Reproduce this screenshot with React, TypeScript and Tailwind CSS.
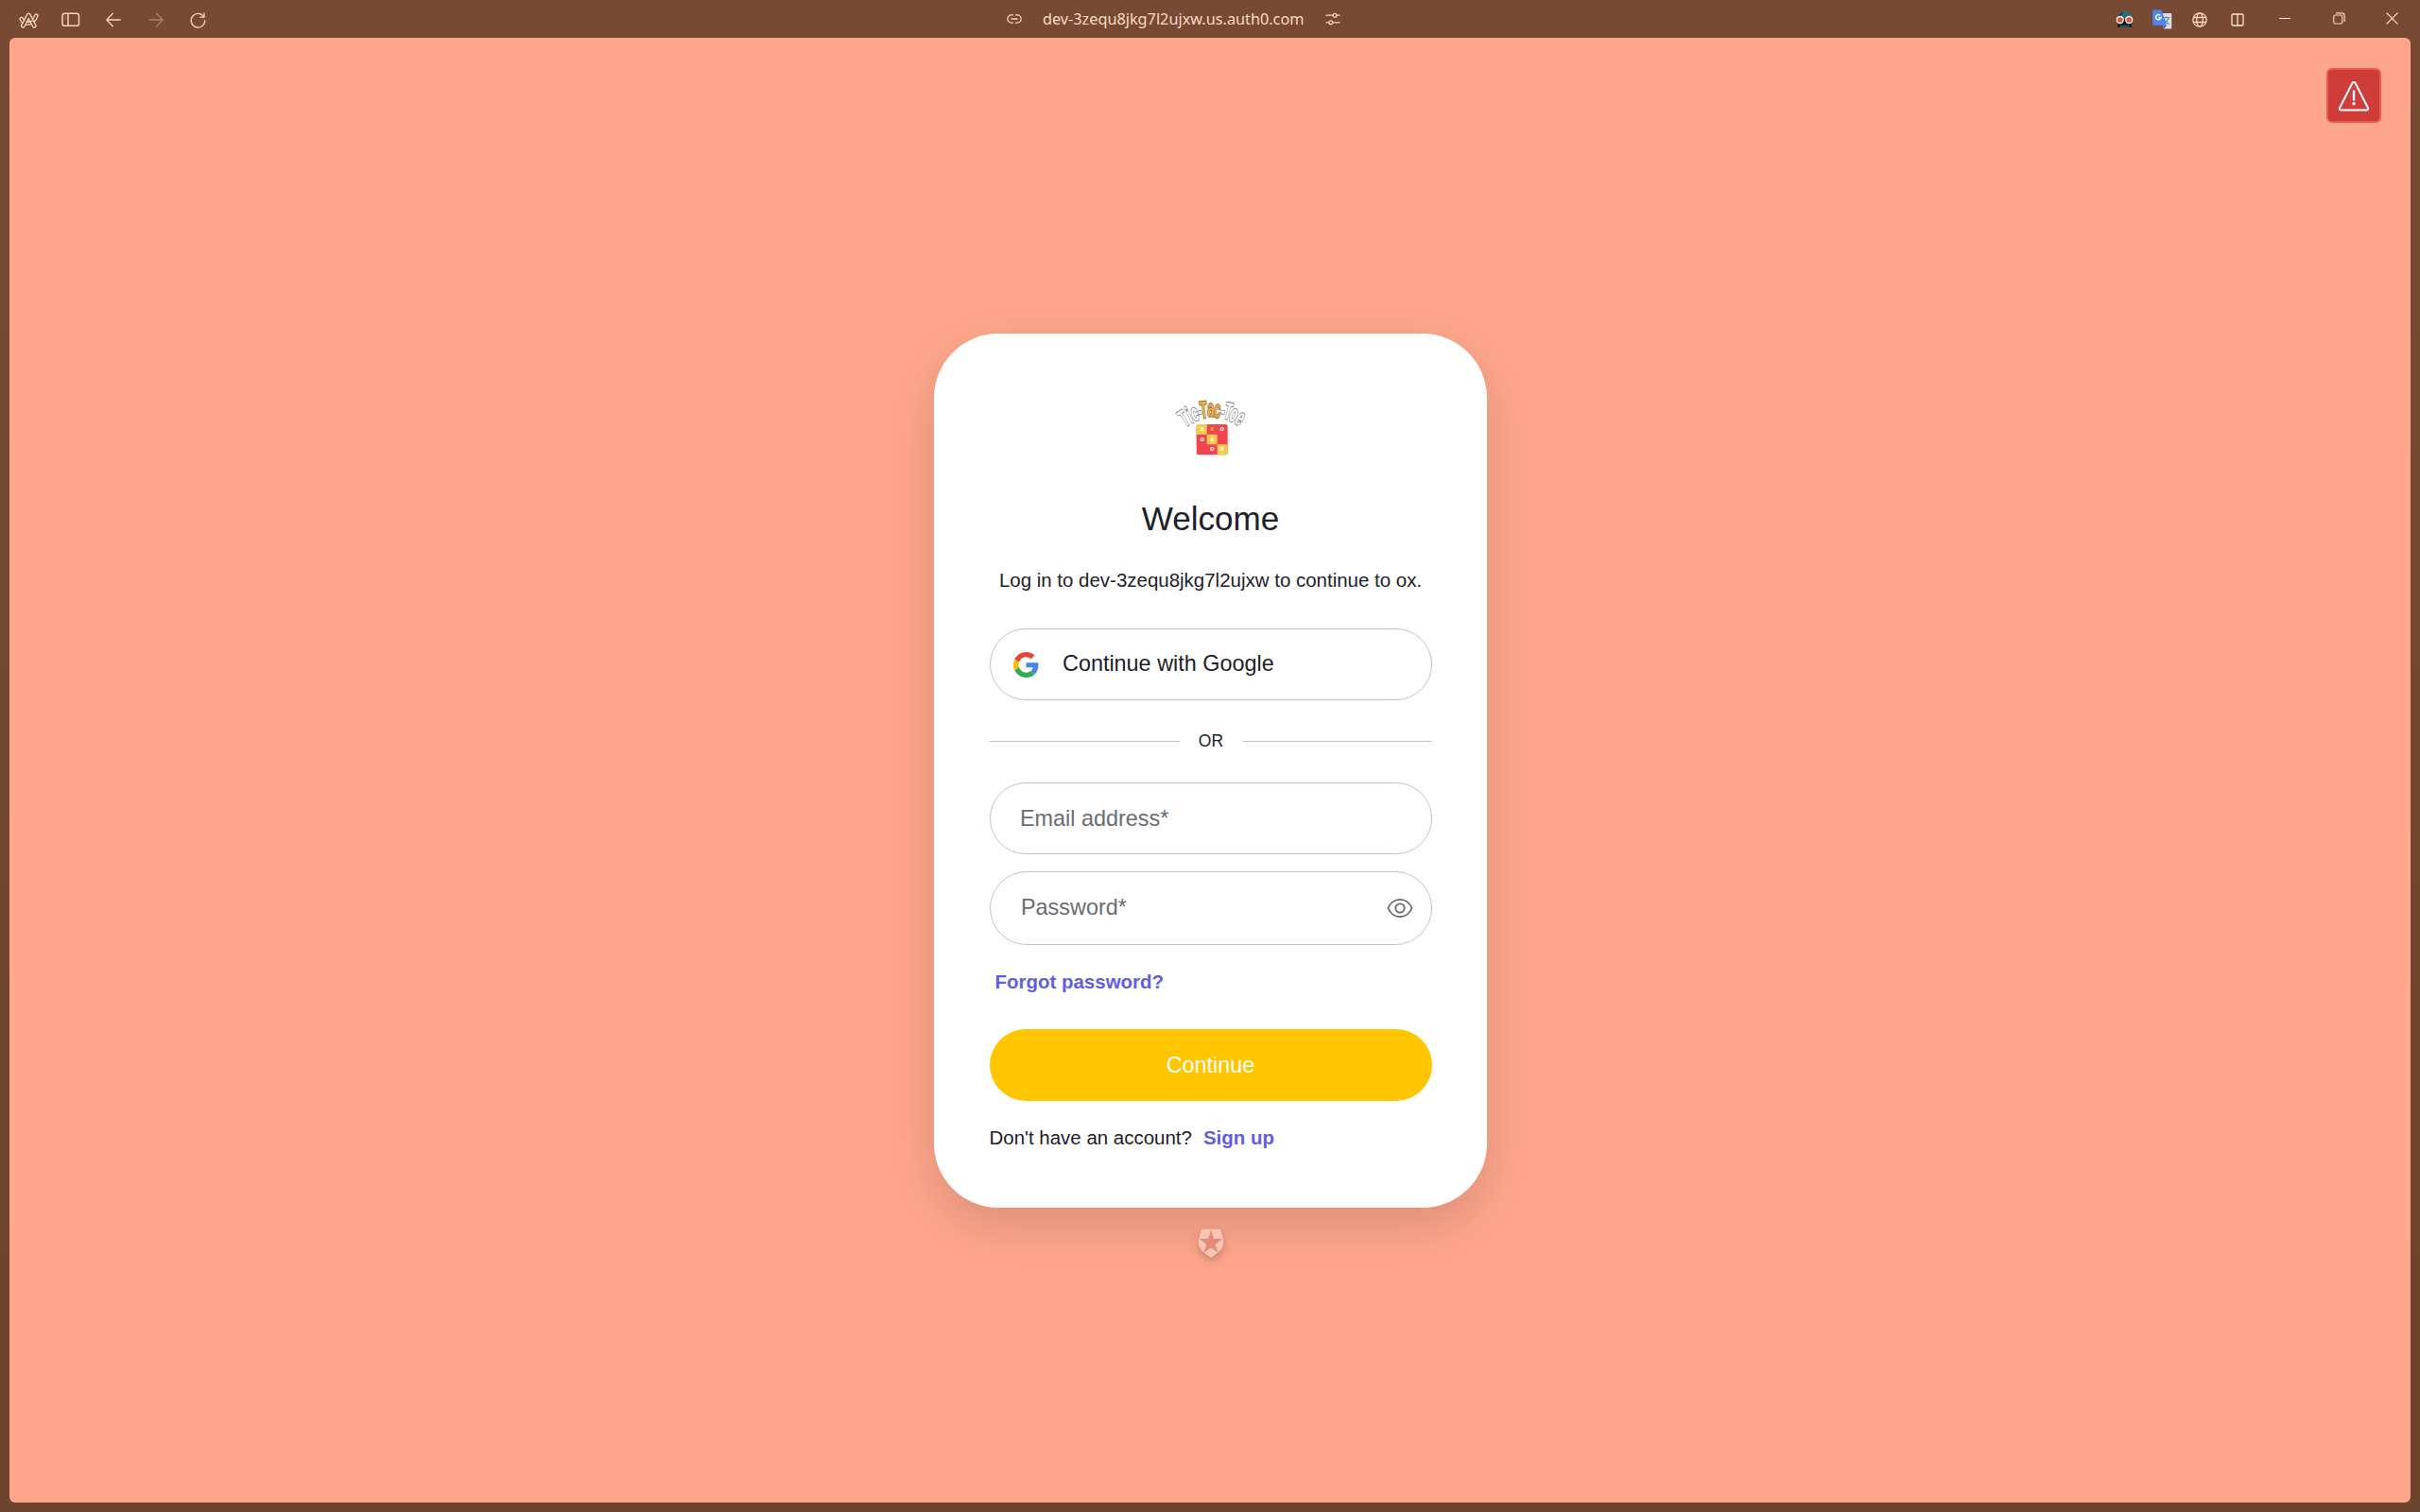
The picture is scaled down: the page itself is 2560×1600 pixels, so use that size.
import React from "react";

const CHROME = "#f6d3bd";

function ArcIcon() {
  const legs = "M4.300 14.900 10.300 3.400 16.300 14.900";
  const ribbon = "M2.700 7.500C5.500 13.800 14.800 14 18.300 4.200";
  return (
    <svg width="21" height="19" viewBox="0 0 21 18" fill="none" strokeLinejoin="round" strokeLinecap="round">
      <path d={ribbon} stroke={CHROME} strokeWidth="4.600" />
      <path d={ribbon} stroke="#774a33" strokeWidth="2" />
      <path d={legs} stroke={CHROME} strokeWidth="4.800" />
      <path d={legs} stroke="#774a33" strokeWidth="2.100" />
      <path d="M8 10.200c2.300 1 4 .7 6-.6" stroke={CHROME} strokeWidth="1.300" />
    </svg>
  );
}

function SidebarIcon() {
  return (
    <svg width="20" height="16" viewBox="0 0 20 16" fill="none" stroke={CHROME} strokeWidth="1.500">
      <rect x="1" y="1.300" width="17.500" height="13" rx="2.600" />
      <path d="M7 1.300v13" />
      <path d="M3.300 4.500h1.600M3.300 6.800h1.600" strokeWidth="0.700" opacity=".6" />
    </svg>
  );
}

function ArrowIcon({ flip = false }: { flip?: boolean }) {
  return (
    <svg width="16" height="16" viewBox="0 0 16 16" fill="none" stroke={CHROME} strokeWidth="1.300" strokeLinecap="round" strokeLinejoin="round" className={flip ? "-scale-x-100 opacity-40" : ""}>
      <path d="M7.300 1.300.8 8l6.500 6.700M.8 8h14.400" />
    </svg>
  );
}

function ReloadIcon() {
  return (
    <svg width="17" height="17" viewBox="0 0 17 17" fill="none" stroke={CHROME} strokeWidth="1.300" strokeLinecap="round" strokeLinejoin="round">
      <path d="M14.800 5A7.300 7.300 0 1 0 15.800 8.800" />
      <path d="M15 1v4.200h-4.200" />
    </svg>
  );
}

function LinkIcon() {
  return (
    <svg width="16" height="10" viewBox="0 0 16 10" fill="none" stroke={CHROME} strokeWidth="1.300" strokeLinecap="round">
      <path d="M6.500.9H4.900a4.100 4.100 0 0 0 0 8.200h1.600M9.500.9h1.600a4.100 4.100 0 0 1 0 8.200H9.500M5 5h6" />
    </svg>
  );
}

function SlidersIcon() {
  return (
    <svg width="16" height="14" viewBox="0 0 16 14" fill="none" stroke={CHROME} strokeWidth="1.300" strokeLinecap="round">
      <path d="M1 3.200h6.800M12.200 3.200H15M1 10.800h2.600M8 10.800h7" />
      <circle cx="10" cy="3.200" r="1.900" />
      <circle cx="5.800" cy="10.800" r="1.900" />
    </svg>
  );
}

function GogglesIcon() {
  return (
    <svg width="19" height="19" viewBox="0 0 19 19">
      <path d="M2.500 8.500h14l.5 9.500H2.200Z" fill="#15191d" />
      <path d="M1.500 9c0-5 3.500-8.500 8-8.500S17.500 4 17.500 9Z" fill="#2f6a78" />
      <path d="M2.500 6.500c1.500-2 3-4 6-4.800L5 6.500Z" fill="#1b3640" />
      <path d="M4.500 15.600h10V18h-10Z" fill="#1d5367" />
      <circle cx="4.700" cy="10" r="3.500" fill="#c95f45" stroke="#fff2e8" strokeWidth="1.300" />
      <circle cx="14.200" cy="10" r="3.500" fill="#c95f45" stroke="#fff2e8" strokeWidth="1.300" />
    </svg>
  );
}

function TranslateIcon() {
  return (
    <svg width="21" height="21" viewBox="0 0 21 21">
      <path d="M8 4h11.200c.6 0 1 .4 1 1v14.500c0 .6-.4 1-1 1H12Z" fill="#dcdfe3" />
      <path d="M11 8.800h7.500M14.500 7.500v1.300M17 9c-.6 3-2.500 5-4.500 6.200M12.500 10.500c1 2 3 4 5 5" stroke="#607d8b" strokeWidth="1.100" fill="none" />
      <path d="M11.200 16.800h4L12 20.500Z" fill="#2f5fc4" />
      <path d="M1.200.5h8.300l5.700 16.300h-14c-.6 0-1-.4-1-1V1.500c0-.6.4-1 1-1Z" fill="#4d86ee" />
      <path d="M8.300 6.300A2.700 2.700 0 1 0 9 8.500H6.300" stroke="#fff" strokeWidth="1.500" fill="none" />
    </svg>
  );
}

function GlobeIcon() {
  return (
    <svg width="16" height="16" viewBox="0 0 16 16" fill="none" stroke={CHROME} strokeWidth="1.300">
      <circle cx="8" cy="8" r="7.200" />
      <ellipse cx="8" cy="8" rx="3.300" ry="7.200" />
      <path d="M1.500 5.500h13M1.500 10.500h13" />
    </svg>
  );
}

function SplitIcon() {
  return (
    <svg width="14" height="14" viewBox="0 0 14 14" fill="none" stroke="#ffe6d6" strokeWidth="1.300">
      <rect x="1" y="1" width="12" height="12" rx="1.300" />
      <path d="M7 1v12" />
    </svg>
  );
}

function RestoreIcon() {
  return (
    <svg width="13" height="13" viewBox="0 0 13 13" fill="none" stroke={CHROME} strokeWidth="1.200">
      <rect x=".8" y="3" width="9" height="9" rx="1.400" />
      <path d="M3 .9h6.300c1.600 0 2.800 1.200 2.800 2.800V10" />
    </svg>
  );
}

function CloseIcon() {
  return (
    <svg width="13" height="13" viewBox="0 0 13 13" fill="none" stroke="#ffe6d6" strokeWidth="1.200">
      <path d="m.6.6 11.800 11.800M12.400.6.6 12.400" />
    </svg>
  );
}

function Slot({ w, children }: { w: string; children?: React.ReactNode }) {
  return <div className={`flex h-full shrink-0 items-center justify-center ${w}`}>{children}</div>;
}

function TitleBar() {
  return (
    <header className="grid h-10 shrink-0 grid-cols-[1058px_1fr_354px]">
      <div className="flex items-center pt-0.5 pl-[7px]">
        <Slot w="w-[46px]"><ArcIcon /></Slot>
        <Slot w="w-[44px]"><SidebarIcon /></Slot>
        <Slot w="w-[45px]"><ArrowIcon /></Slot>
        <Slot w="w-[45px]"><ArrowIcon flip /></Slot>
        <Slot w="w-[45px]"><ReloadIcon /></Slot>
      </div>
      <div className="flex items-center pl-[7px]">
        <LinkIcon />
        <span className="ml-[22px] w-[277px] whitespace-nowrap font-['Noto_Sans'] text-[16.250px] leading-10 text-[#f8dac5]">dev-3zequ8jkg7l2ujxw.us.auth0.com</span>
        <span className="ml-[22px]"><SlidersIcon /></span>
      </div>
      <div className="flex items-center">
        <div className="flex h-full items-center pt-px pl-[21px]">
          <Slot w="w-[40px]"><GogglesIcon /></Slot>
          <Slot w="w-[40px]"><TranslateIcon /></Slot>
          <Slot w="w-[40px]"><GlobeIcon /></Slot>
          <Slot w="w-[40px]"><SplitIcon /></Slot>
        </div>
        <div className="flex h-full items-center pb-0.5 pl-px">
          <Slot w="w-[58px]"><div className="h-px w-3 bg-[#ffe6d6]" /></Slot>
          <Slot w="w-[56px]"><RestoreIcon /></Slot>
          <Slot w="w-[57px]"><CloseIcon /></Slot>
        </div>
      </div>
    </header>
  );
}

const LETTERS: { c: string; x: number; y: number; a: number; gold?: boolean }[] = [
  { c: "-", x: 150, y: 127, a: -8 },
  { c: "-", x: 218, y: 126, a: 8 },
  { c: "T", x: 111, y: 150, a: -33 },
  { c: "i", x: 125, y: 142, a: -25 },
  { c: "c", x: 138, y: 135, a: -18 },
  { c: "T", x: 232, y: 130, a: 14 },
  { c: "o", x: 247, y: 137, a: 22 },
  { c: "e", x: 264, y: 147, a: 31 },
  { c: "T", x: 163, y: 127, a: -7, gold: true },
  { c: "a", x: 182, y: 124, a: 0, gold: true },
  { c: "c", x: 202, y: 125, a: 4, gold: true },
];

const MARKS = [
  { c: "x", x: 155, y: 168, f: "#fff" },
  { c: "x", x: 187, y: 168, f: "#f8c63f" },
  { c: "o", x: 218, y: 168, f: "#fff" },
  { c: "o", x: 155, y: 200, f: "#fff" },
  { c: "x", x: 187, y: 200, f: "#fff" },
  { c: "o", x: 187, y: 232, f: "#fff" },
  { c: "x", x: 218, y: 232, f: "#fff" },
];

function GameLogo() {
  return (
    <svg width="84" height="69" viewBox="57 51 252 207" className="mt-[64px] shrink-0 overflow-visible">
      <g fontFamily="Liberation Sans" fontWeight="700" fontSize="76" textAnchor="middle">
        {LETTERS.map((l, i) => (
          <text
            key={i}
            transform={`translate(${l.x} ${l.y}) rotate(${l.a}) scale(${l.c === "-" ? ".5 .9" : ".5 1"})`}
            fill={l.gold ? "#f3ab3c" : "#fff"}
            stroke={l.gold ? "#86704f" : "#808080"}
            strokeWidth="6"
            paintOrder="stroke"
          >
            {l.c}
          </text>
        ))}
      </g>
      <rect x="137" y="147" width="99" height="97" rx="7" fill="#f0444f" />
      <path d="M144 147h26v32h-33v-25a7 7 0 0 1 7-7ZM170 179h33v32h-33ZM203 211h33v26a7 7 0 0 1-7 7h-26Z" fill="#f4cb4e" />
      <g fontFamily="Liberation Sans" fontWeight="700" fontSize="22" textAnchor="middle">
        {MARKS.map((m, i) => (
          <text key={i} x={m.x} y={m.y} fill={m.f}>{m.c}</text>
        ))}
      </g>
    </svg>
  );
}

function GoogleIcon() {
  return (
    <svg width="27" height="27" viewBox="0 0 48 48">
      <path fill="#EA4335" d="M24 9.500c3.540 0 6.710 1.220 9.210 3.600l6.850-6.850C35.900 2.380 30.470 0 24 0 14.620 0 6.510 5.380 2.560 13.220l7.980 6.190C12.430 13.720 17.740 9.500 24 9.500z" />
      <path fill="#4285F4" d="M46.980 24.550c0-1.570-.15-3.090-.38-4.550H24v9.020h12.940c-.58 2.960-2.260 5.480-4.780 7.180l7.730 6c4.510-4.180 7.090-10.360 7.090-17.650z" />
      <path fill="#FBBC05" d="M10.530 28.590c-.48-1.450-.76-2.990-.76-4.590s.27-3.140.76-4.590l-7.980-6.190C.92 16.460 0 20.120 0 24c0 3.880.92 7.540 2.560 10.780l7.970-6.190z" />
      <path fill="#34A853" d="M24 48c6.480 0 11.930-2.130 15.890-5.810l-7.730-6c-2.150 1.450-4.920 2.300-8.160 2.300-6.260 0-11.570-4.220-13.470-9.910l-7.980 6.190C6.510 42.620 14.620 48 24 48z" />
    </svg>
  );
}

function EyeIcon() {
  return (
    <svg width="28" height="22" viewBox="0 0 28 22" fill="none" stroke="#65676e" strokeWidth="1.800" strokeLinejoin="round">
      <path d="M1.500 11C3.500 5.500 8.500 1.900 14 1.900S24.500 5.500 26.500 11C24.500 16.500 19.500 20.100 14 20.100S3.500 16.500 1.500 11Z" />
      <circle cx="14" cy="11" r="4.700" />
    </svg>
  );
}

function ShieldBadge() {
  return (
    <svg width="28" height="32" viewBox="0 0 28 32" className="mt-[22px] shrink-0 drop-shadow-[0_4px_4px_rgba(0,0,0,0.2)]">
      <path d="M4.200.7h19.600l2.900 9.200c1.700 5.600-.2 11.600-5 15.300L14 31l-7.700-5.800c-4.800-3.700-6.700-9.700-5-15.300Z" fill="#fdc6b3" />
      <path d="m14 1.200 2.900 9.600h9.700l-7.900 6 3 9.300L14 20.300 6.300 26.100l3-9.300-7.900-6h9.700Z" fill="#e38d78" />
    </svg>
  );
}

function LoginCard() {
  return (
    <main className="flex h-[925px] w-[585px] shrink-0 flex-col items-center rounded-[68px] bg-white pr-[58px] pl-[59px] font-['Liberation_Sans',sans-serif] text-[#1e212a] shadow-[0_18px_58px_rgba(0,0,0,0.15)]">
      <GameLogo />
      <h1 className="mt-[39px] mr-px text-[35.100px] leading-[48px]">Welcome</h1>
      <p className="mt-[26px] mr-px text-[20.475px] leading-[30px] whitespace-nowrap">Log in to dev-3zequ8jkg7l2ujxw to continue to ox.</p>
      <button className="mt-9 flex h-[76px] w-[468px] shrink-0 items-center rounded-[38px] border border-[#c2c3c7] pl-6 text-[23.400px]">
        <GoogleIcon />
        <span className="ml-[25px] pb-0.5 leading-8">Continue with Google</span>
      </button>
      <div className="mt-7 flex h-[30px] w-full items-center text-[17.550px]">
        <div className="h-px flex-1 bg-[#c2c3c7]" />
        <span className="w-[67px] text-center leading-[30px]">OR</span>
        <div className="h-px flex-1 bg-[#c2c3c7]" />
      </div>
      <div className="mt-[29px] flex h-[76px] w-[468px] shrink-0 items-center rounded-[38px] border border-[#c2c3c7] pl-[31px] text-[23.400px] text-[#6a6c71]">
        <span className="pt-px">Email address*</span>
      </div>
      <div className="mt-[18px] flex h-[78px] w-[468px] shrink-0 items-center justify-between rounded-[39px] border border-[#c2c3c7] pr-[19px] pl-8 text-[23.400px] text-[#6a6c71]">
        <span className="pb-px">Password*</span>
        <EyeIcon />
      </div>
      <div className="mt-6 w-full pl-[5.500px] text-[20.475px] leading-[30px] font-bold text-[#625ce8]">Forgot password?</div>
      <button className="mt-[35px] h-[76px] w-[468px] shrink-0 rounded-[38px] bg-[#ffc600] pr-px text-[23.400px] leading-[76px] text-white">Continue</button>
      <div className="mt-6 -ml-px flex w-full text-[20.475px] leading-[30px]">
        <span>Don't have an account?</span>
        <span className="ml-3 font-bold text-[#625ce8]">Sign up</span>
      </div>
    </main>
  );
}

export default function App() {
  return (
    <div className="flex h-[1600px] w-[2560px] flex-col overflow-hidden bg-linear-to-b from-[#784a33] to-[#6c432d]">
      <TitleBar />
      <section className="relative mx-[10px] flex h-[1550px] flex-col items-center rounded-[6px] bg-[#ffa78c] pt-[313px] pl-px">
        <LoginCard />
        <ShieldBadge />
        <button className="absolute top-8 right-[31.500px] flex size-[58px] items-center justify-center rounded-[6px] border-2 border-[#ea5a54] bg-[#d03c38] pt-px">
          <svg width="34" height="34" viewBox="0 0 34 34" fill="none" stroke="#fff" strokeWidth="2" strokeLinejoin="round" strokeLinecap="round">
            <path d="M15.500 2.800c.7-1.200 2.300-1.200 3 0L32 29.200c.7 1.300 0 2.300-1.400 2.300H3.400c-1.400 0-2.100-1-1.400-2.300Z" />
            <path d="M17 11.500v9" strokeWidth="2.400" />
            <circle cx="17" cy="24.800" r=".7" />
          </svg>
        </button>
      </section>
    </div>
  );
}
